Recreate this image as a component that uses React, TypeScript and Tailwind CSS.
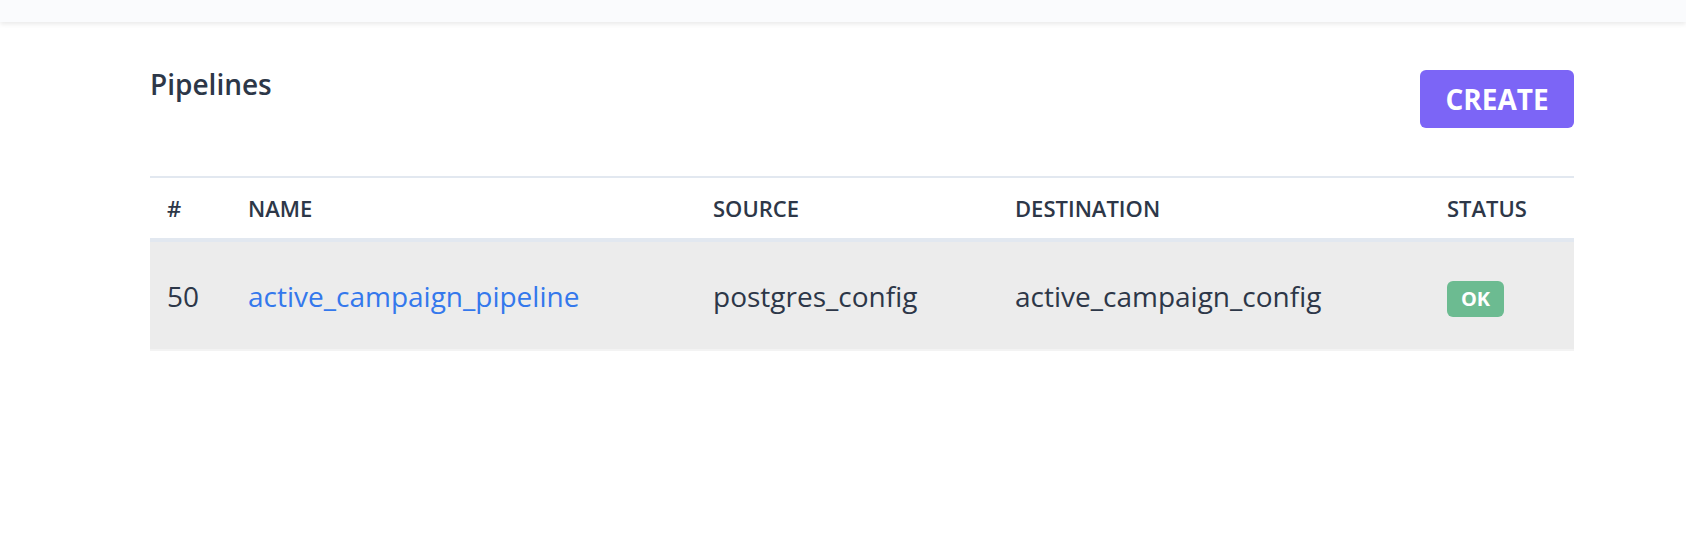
const columns = ['#', 'Name', 'Source', 'Destination', 'Status']

const pipelines = [
  {
    id: 50,
    name: 'active_campaign_pipeline',
    source: 'postgres_config',
    destination: 'active_campaign_config',
    status: 'OK',
  },
]

const gridCols = 'grid grid-cols-[81px_465px_302px_432px_144px]'

export default function App() {
  return (
    <div className="min-h-[536px] bg-white text-[#2d3748] font-['Open_Sans',sans-serif]">
      {/* Top nav strip */}
      <div className="h-[22px] bg-[#fafbfd] shadow-[0_2px_5px_rgba(0,0,0,0.09)]" />

      <div className="ml-[150px] w-[1424px] pt-[41px]">
        <div className="flex items-start justify-between">
          <h1 className="text-[28px] leading-[42px] font-semibold">Pipelines</h1>
          <button className="mt-[7px] flex h-[58px] w-[154px] items-center justify-center rounded-[6px] bg-[#7c65f6] text-[28px] font-bold text-white">
            CREATE
          </button>
        </div>

        <div className="mt-[48px] border-t-2 border-[#e2e8f0]">
          <div className={`${gridCols} h-[64px] items-center border-b-4 border-[#e2e8f0]`}>
            {columns.map((c) => (
              <div key={c} className="px-[17px] text-[22px] font-semibold uppercase">
                {c}
              </div>
            ))}
          </div>

          {pipelines.map((p) => (
            <div
              key={p.id}
              className={`${gridCols} h-[109px] items-center border-b-2 border-[#f3f3f3] bg-[#ececec] text-[28px]`}
            >
              <div className="px-[17px]">{p.id}</div>
              <div className="px-[17px]">
                <a href="#" className="text-[#3478ec]">
                  {p.name}
                </a>
              </div>
              <div className="px-[17px]">{p.source}</div>
              <div className="px-[17px]">{p.destination}</div>
              <div className="px-[17px]">
                <span className="inline-flex h-[36px] w-[57px] items-center justify-center rounded-[6px] bg-[#6cbb91] text-[20px] font-bold text-white">
                  {p.status}
                </span>
              </div>
            </div>
          ))}
        </div>
      </div>
    </div>
  )
}
